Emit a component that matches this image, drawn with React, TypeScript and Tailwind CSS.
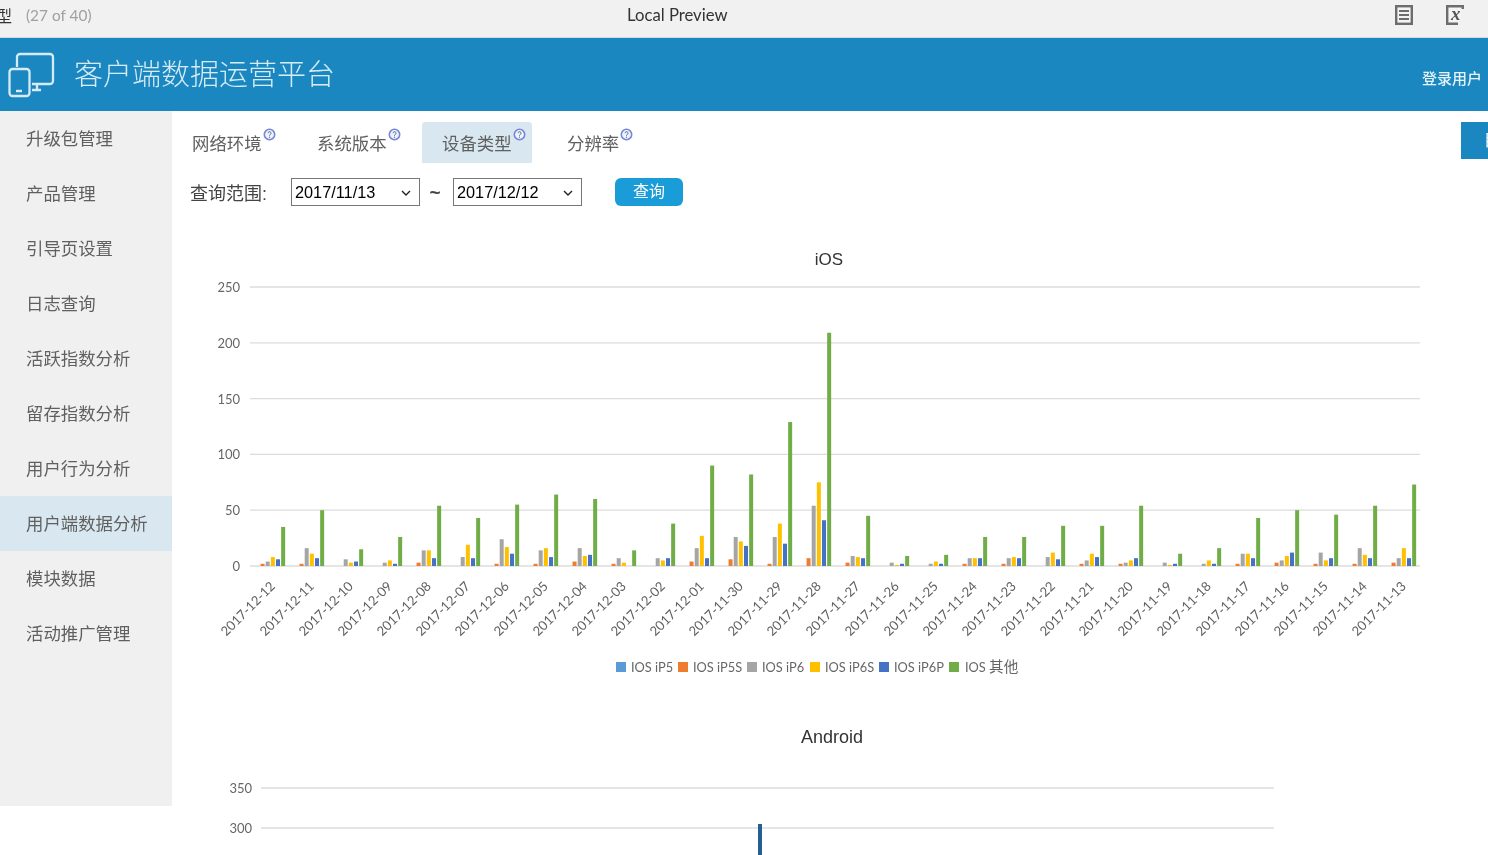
import React from "react"

const NAV = [
  "升级包管理",
  "产品管理",
  "引导页设置",
  "日志查询",
  "活跃指数分析",
  "留存指数分析",
  "用户行为分析",
  "用户端数据分析",
  "模块数据",
  "活动推广管理",
]

const TABS = ["网络环境", "系统版本", "设备类型", "分辨率"]

const COLORS = ["#5b9bd5", "#ed7d31", "#a5a5a5", "#ffc000", "#4472c4", "#70ad47"]

const LEGEND = [
  { box: 616, text: 631, label: "IOS iP5", extra: "" },
  { box: 678, text: 693, label: "IOS iP5S", extra: "" },
  { box: 747, text: 762, label: "IOS iP6", extra: "" },
  { box: 810, text: 825, label: "IOS iP6S", extra: "" },
  { box: 879, text: 894, label: "IOS iP6P", extra: "" },
  { box: 949, text: 965, label: "IOS ", extra: "其他" },
]

// date, then iP5, iP5S, iP6, iP6S, iP6P, other
const IOS_DATA: [string, number, number, number, number, number, number][] = [
  ["2017-12-12", 0, 2, 4, 8, 6, 35],
  ["2017-12-11", 0, 2, 16, 11, 7, 50],
  ["2017-12-10", 0, 0, 6, 3, 4, 15],
  ["2017-12-09", 0, 0, 3, 5, 2, 26],
  ["2017-12-08", 0, 3, 14, 14, 7, 54],
  ["2017-12-07", 0, 0, 8, 19, 7, 43],
  ["2017-12-06", 0, 2, 24, 17, 11, 55],
  ["2017-12-05", 0, 2, 14, 16, 8, 64],
  ["2017-12-04", 0, 4, 16, 9, 10, 60],
  ["2017-12-03", 0, 2, 7, 3, 0, 14],
  ["2017-12-02", 0, 0, 7, 5, 7, 38],
  ["2017-12-01", 0, 4, 16, 27, 7, 90],
  ["2017-11-30", 0, 6, 26, 22, 18, 82],
  ["2017-11-29", 0, 2, 26, 38, 20, 129],
  ["2017-11-28", 0, 7, 54, 75, 41, 209],
  ["2017-11-27", 0, 3, 9, 8, 7, 45],
  ["2017-11-26", 0, 0, 3, 1, 2, 9],
  ["2017-11-25", 0, 0, 2, 4, 2, 10],
  ["2017-11-24", 0, 2, 7, 7, 7, 26],
  ["2017-11-23", 0, 2, 7, 8, 7, 26],
  ["2017-11-22", 0, 0, 8, 12, 6, 36],
  ["2017-11-21", 0, 2, 5, 11, 8, 36],
  ["2017-11-20", 0, 2, 3, 5, 7, 54],
  ["2017-11-19", 0, 0, 3, 1, 2, 11],
  ["2017-11-18", 0, 0, 2, 5, 2, 16],
  ["2017-11-17", 0, 2, 11, 11, 7, 43],
  ["2017-11-16", 0, 3, 5, 9, 12, 50],
  ["2017-11-15", 0, 2, 12, 5, 7, 46],
  ["2017-11-14", 0, 2, 16, 10, 7, 54],
  ["2017-11-13", 0, 3, 7, 16, 7, 73],
]

const BASE_Y = 566
const UNIT = 1.116

function HelpDot() {
  return (
    <svg width="13" height="13" viewBox="0 0 13 13" className="ml-[1px] -mt-[20px] shrink-0">
      <circle cx="6.5" cy="6.5" r="5.2" fill="#f2f4fc" stroke="#7388d8" strokeWidth="1.6" />
      <path d="M5 5.2a1.5 1.5 0 1 1 2.3 1.3c-.5.3-.8.5-.8 1.1" fill="none" stroke="#4f5f92" strokeWidth="1" />
      <circle cx="6.5" cy="9.2" r="0.6" fill="#4f5f92" />
    </svg>
  )
}

function DateSelect({ value }: { value: string }) {
  return (
    <div className="relative w-[129px] h-[28px] shrink-0">
      <select
        defaultValue={value}
        className="appearance-none block w-full h-full border border-[#767676] bg-white pl-[3px] pt-[1px] text-[16.3px] text-black"
      >
        <option>{value}</option>
      </select>
      <svg width="10" height="6" viewBox="0 0 10 6" className="absolute left-[110px] top-[12px] pointer-events-none">
        <path d="M1 1l4 4 4-4" fill="none" stroke="#222" strokeWidth="1.4" />
      </svg>
    </div>
  )
}

function IosChart() {
  return (
    <svg viewBox="172 240 1316 470" className="block w-[1316px] h-[470px] font-['Lato','Noto_Sans_CJK_SC',sans-serif]">
      <text x="829" y="265" textAnchor="middle" fontSize="17" fill="#333" className="font-['Liberation_Sans',sans-serif]">
        iOS
      </text>
      {[0, 50, 100, 150, 200, 250].map((v) => {
        const y = BASE_Y - v * UNIT
        return (
          <g key={v}>
            <line x1="250" x2="1420" y1={y} y2={y} stroke="#dcdcdc" strokeWidth="1.3" />
            <text x="240" y={y + 5} textAnchor="end" fontSize="13" fill="#666">
              {v}
            </text>
          </g>
        )
      })}
      {IOS_DATA.map(([date, ...values], i) => {
        const left = 250 + i * 39
        return (
          <g key={date}>
            {values.map((v, s) =>
              v > 0 ? (
                <rect
                  key={s}
                  x={left + 5.4 + s * 5.15}
                  y={BASE_Y - v * UNIT}
                  width="4"
                  height={v * UNIT}
                  fill={COLORS[s]}
                />
              ) : null
            )}
            <text
              x={left + 26}
              y={587}
              textAnchor="end"
              fontSize="13.1"
              fill="#5f5f5f"
              transform={`rotate(-45 ${left + 26} 587)`}
            >
              {date}
            </text>
          </g>
        )
      })}
      {LEGEND.map((l, i) => (
        <g key={l.label}>
          <rect x={l.box} y="662" width="10" height="10" fill={COLORS[i]} />
          <text x={l.text} y="672" fontSize="12.8" fill="#666" xmlSpace="preserve">
            {l.label}
            {l.extra && <tspan fontSize="14.6">{l.extra}</tspan>}
          </text>
        </g>
      ))}
    </svg>
  )
}

function AndroidChart() {
  return (
    <svg viewBox="172 710 1316 145" className="block w-[1316px] h-[145px] font-['Lato',sans-serif]">
      <text x="832" y="743" textAnchor="middle" fontSize="18" fill="#333" className="font-['Liberation_Sans',sans-serif]">
        Android
      </text>
      {[
        { label: "350", y: 788 },
        { label: "300", y: 828 },
      ].map((g) => (
        <g key={g.label}>
          <line x1="261" x2="1274" y1={g.y} y2={g.y} stroke="#dcdcdc" strokeWidth="1.3" />
          <text x="252" y={g.y + 5} textAnchor="end" fontSize="13" fill="#666">
            {g.label}
          </text>
        </g>
      ))}
      <rect x="758" y="824" width="4" height="31" fill="#255e91" />
    </svg>
  )
}

export default function App() {
  return (
    <div className="w-[1488px] h-[855px] overflow-hidden bg-white blur-[0.35px] font-['Liberation_Sans','Noto_Sans_CJK_SC',sans-serif]">
      <div className="h-[38px] pb-[6px] bg-[#f1f1f1] border-b border-[#d9d9d9] flex items-center relative font-['Lato','Noto_Sans_CJK_SC',sans-serif]">
        <span className="text-[16px] text-[#333] -ml-[4px]">型</span>
        <span className="text-[15.4px] text-[#a0a0a0] ml-[14px]">(27 of 40)</span>
        <span className="absolute left-[627px] text-[16.7px] text-[#333]">Local Preview</span>
        <div className="ml-auto mr-[23px] flex items-center gap-[33px] mt-[7px] pb-[8px]">
          <svg width="18" height="20" viewBox="0 0 18 20">
            <rect x="1.2" y="1.2" width="15.6" height="17.6" fill="#f4f4f4" stroke="#6d6d6d" strokeWidth="2.4" />
            <path d="M4 6h10M4 10h10M4 14h10" stroke="#6d6d6d" strokeWidth="2" />
          </svg>
          <svg width="19" height="20" viewBox="0 0 19 20">
            <path d="M18 1.2H1.2v17.6H12" fill="#f4f4f4" stroke="#6d6d6d" strokeWidth="2.4" />
            <path d="M16.8 1v3" stroke="#6d6d6d" strokeWidth="2.4" />
            <text x="5" y="15" fontSize="19" fontStyle="italic" fontWeight="bold" fill="#555" className="font-['Liberation_Serif',serif]">
              x
            </text>
          </svg>
        </div>
      </div>

      <header className="h-[73px] bg-[#1a87c0] flex items-center">
        <svg width="48" height="46" viewBox="0 0 48 46" className="ml-[8px]" fill="none" stroke="#d5ebf5" strokeWidth="2.3">
          <path d="M9 15V5a3 3 0 0 1 3-3h30a3 3 0 0 1 3 3v24a3 3 0 0 1-3 3H24" />
          <path d="M24 38h9M29 33v5" />
          <rect x="1.5" y="17" width="20" height="27" rx="3" />
          <path d="M8 39h6" strokeWidth="2.5" />
        </svg>
        <span className="ml-[18px] mt-[2px] text-[29px] font-light text-[#d5ebf5]">客户端数据运营平台</span>
        <span className="ml-auto mr-[6px] mt-[10px] text-[15px] font-medium text-[#e6f4fa]">登录用户</span>
      </header>

      <div className="flex h-[744px]">
        <nav className="w-[172px] h-[695px] bg-[#f0f0f0] shrink-0">
          {NAV.map((item) => (
            <div
              key={item}
              className={
                item === "用户端数据分析"
                  ? "h-[55px] pl-[26px] pt-[2px] flex items-center text-[17.4px] text-[#606060] bg-[#d9e8f0]"
                  : "h-[55px] pl-[26px] pt-[2px] flex items-center text-[17.4px] text-[#606060]"
              }
            >
              {item}
            </div>
          ))}
        </nav>

        <main className="flex-1 min-w-0 overflow-hidden">
          <div className="flex pt-[11px] h-[52px]">
            <div className="flex gap-[15px]">
              {TABS.map((tab) => (
                <div
                  key={tab}
                  className={
                    tab === "设备类型"
                      ? "w-[110px] h-[41px] pl-[20px] pt-[4px] flex items-center text-[17.4px] text-[#606060] bg-[#d9e8f0] rounded-t-[3px]"
                      : "w-[110px] h-[41px] pl-[20px] pt-[4px] flex items-center text-[17.4px] text-[#606060]"
                  }
                >
                  {tab}
                  <HelpDot />
                </div>
              ))}
            </div>
            <div className="ml-auto w-[27px] h-[37px] bg-[#1a87c0] pl-[23px] overflow-hidden flex items-center text-[16px] text-white">
              <span className="shrink-0">目</span>
            </div>
          </div>

          <div className="flex items-center h-[28px] mt-[15px] pl-[18px]">
            <span className="w-[101px] pt-[4px] text-[18px] text-[#444]">查询范围:</span>
            <DateSelect value="2017/11/13" />
            <span className="w-[33px] pr-[3px] text-center text-[19px] font-bold leading-none text-[#444]">~</span>
            <DateSelect value="2017/12/12" />
            <button className="ml-[33px] w-[68px] h-[28px] rounded-[6px] bg-[#1a9cd8] text-[16px] text-white">查询</button>
          </div>

          <div className="mt-[34px]">
            <IosChart />
            <AndroidChart />
          </div>
        </main>
      </div>
    </div>
  )
}
